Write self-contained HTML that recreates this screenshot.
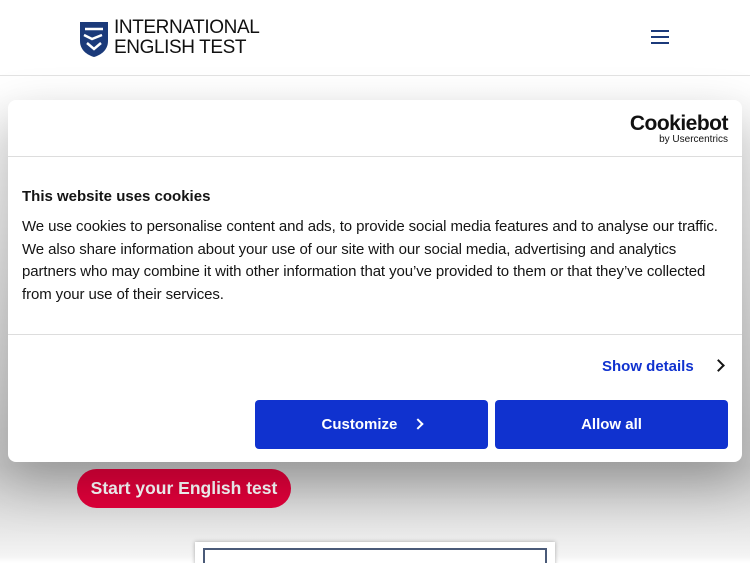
<!DOCTYPE html>
<html><head><style>
html,body{margin:0;width:750px;height:563px;overflow:hidden}
body{background:#fff;font-family:"Liberation Sans",sans-serif;position:relative}
.hdr{position:absolute;left:0;top:0;width:750px;height:75px;border-bottom:1px solid #e3e3e3;background:#fff}
.logo{position:absolute;left:114px;top:18px;font-family:"Liberation Sans",sans-serif;font-size:19px;line-height:20px;color:#111;letter-spacing:-0.4px}
.shade{position:absolute;left:0;top:76px;width:750px;height:487px;background:linear-gradient(#fff 0,#fff 10px,#c8c8c8 390px,#f4f4f4 480px,#fff 487px)}
.dlg{position:absolute;left:8px;top:100px;width:734px;height:362px;background:#fff;border-radius:8px;box-shadow:0 20px 50px rgba(0,0,0,.25)}
.btn{position:absolute;top:300px;width:233px;height:49px;background:#1032cf;color:#fff;border-radius:4px;font-weight:bold;font-size:15px;text-align:center;line-height:49px}
.chev{display:inline-block;width:7px;height:7px;border-right:2px solid currentColor;border-top:2px solid currentColor;transform:rotate(45deg);vertical-align:middle;margin-top:-3px}
</style></head><body>
<div class="shade"></div>
<div class="hdr">
<svg style="position:absolute;left:79px;top:21px" width="30" height="37" viewBox="0 0 30 37"><path d="M1 1H29V20C29 29 22 34 15 36C8 34 1 29 1 20Z" fill="#1b3a7a"/><path d="M6 8h18M5 14l8 4 10-4M8 22l7 6 7-6" stroke="#fff" stroke-width="2.5" fill="none"/></svg>
<div class="logo">INTERNATIONAL<br>ENGLISH TEST</div>
<div style="position:absolute;left:651px;top:30px;width:18px;height:2px;background:#1b3a7a;box-shadow:0 6px 0 #1b3a7a,0 12px 0 #1b3a7a"></div>
</div>
<div style="position:absolute;left:77px;top:469px;width:214px;height:39px;background:#e0003a;border-radius:20px;color:#fff;font-weight:bold;font-size:17.5px;line-height:39px;text-align:center">Start your English test</div>
<div style="position:absolute;left:195px;top:542px;width:360px;height:30px;background:#fff;box-shadow:0 0 4px rgba(0,0,0,.3)"><div style="margin:6px 8px;height:30px;border:2px solid #4a5a78"></div></div>
<div class="dlg">
<div style="position:absolute;right:14px;top:13px;text-align:right;color:#111"><div style="font-size:21px;font-weight:bold;letter-spacing:-0.5px;line-height:22px">Cookiebot</div><div style="font-size:10px;line-height:10px">by Usercentrics</div></div>
<div style="position:absolute;left:0;top:56px;width:734px;height:1px;background:#ddd"></div>
<div style="position:absolute;left:14px;top:88px;font-weight:bold;font-size:15px;color:#141414">This website uses cookies</div>
<div style="position:absolute;left:14px;top:116px;width:705px;font-size:15px;letter-spacing:-0.1px;line-height:22.7px;color:#141414">We use cookies to personalise content and ads, to provide social media features and to analyse our traffic. We also share information about your use of our site with our social media, advertising and analytics partners who may combine it with other information that you’ve provided to them or that they’ve collected from your use of their services.</div>
<div style="position:absolute;left:0;top:234px;width:734px;height:1px;background:#ddd"></div>
<div style="position:absolute;left:594px;top:258px;font-weight:bold;font-size:15px;color:#1032cf">Show details <span class="chev" style="color:#141414;margin-left:16px"></span></div>
<div class="btn" style="left:247px">Customize <span class="chev" style="margin-left:12px;width:6px;height:6px"></span></div>
<div class="btn" style="left:487px">Allow all</div>
</div>
</body></html>
